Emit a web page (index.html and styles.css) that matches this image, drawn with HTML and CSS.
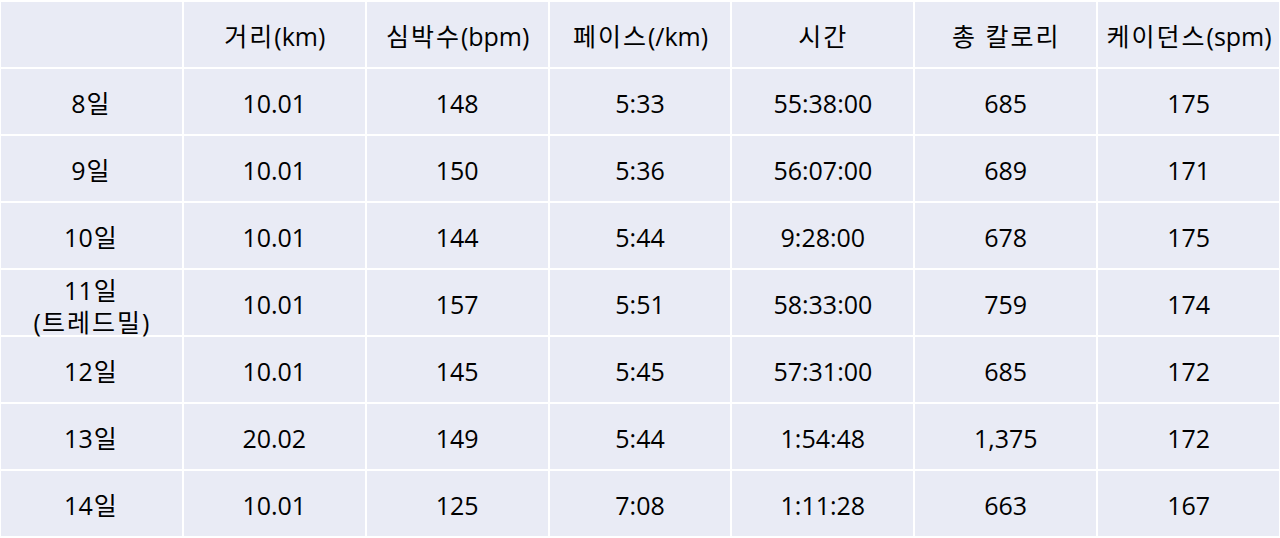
FILE: index.html
```html
<!DOCTYPE html>
<html lang="ko">
<head>
<meta charset="utf-8">
<link rel="stylesheet" href="styles.css">
</head>
<body>
<div class="table">
  <div class="cell"></div>
  <div class="cell"><span class="ko">거리</span>(km)</div>
  <div class="cell"><span class="ko">심박수</span>(bpm)</div>
  <div class="cell"><span class="ko">페이스</span>(/km)</div>
  <div class="cell"><span class="ko">시간</span></div>
  <div class="cell"><span class="ko">총 칼로리</span></div>
  <div class="cell"><span class="ko">케이던스</span>(spm)</div>

  <div class="cell">8<span class="ko">일</span></div>
  <div class="cell">10.01</div>
  <div class="cell">148</div>
  <div class="cell">5:33</div>
  <div class="cell">55:38:00</div>
  <div class="cell">685</div>
  <div class="cell">175</div>

  <div class="cell">9<span class="ko">일</span></div>
  <div class="cell">10.01</div>
  <div class="cell">150</div>
  <div class="cell">5:36</div>
  <div class="cell">56:07:00</div>
  <div class="cell">689</div>
  <div class="cell">171</div>

  <div class="cell">10<span class="ko">일</span></div>
  <div class="cell">10.01</div>
  <div class="cell">144</div>
  <div class="cell">5:44</div>
  <div class="cell">9:28:00</div>
  <div class="cell">678</div>
  <div class="cell">175</div>

  <div class="cell two">11<span class="ko">일</span><br>(<span class="ko">트레드밀</span>)</div>
  <div class="cell">10.01</div>
  <div class="cell">157</div>
  <div class="cell">5:51</div>
  <div class="cell">58:33:00</div>
  <div class="cell">759</div>
  <div class="cell">174</div>

  <div class="cell">12<span class="ko">일</span></div>
  <div class="cell">10.01</div>
  <div class="cell">145</div>
  <div class="cell">5:45</div>
  <div class="cell">57:31:00</div>
  <div class="cell">685</div>
  <div class="cell">172</div>

  <div class="cell">13<span class="ko">일</span></div>
  <div class="cell">20.02</div>
  <div class="cell">149</div>
  <div class="cell">5:44</div>
  <div class="cell">1:54:48</div>
  <div class="cell">1,375</div>
  <div class="cell">172</div>

  <div class="cell">14<span class="ko">일</span></div>
  <div class="cell">10.01</div>
  <div class="cell">125</div>
  <div class="cell">7:08</div>
  <div class="cell">1:11:28</div>
  <div class="cell">663</div>
  <div class="cell">167</div>
</div>
</body>
</html>
```
FILE: styles.css
```css
html, body {
  margin: 0;
  padding: 0;
  background: #ffffff;
}
body {
  width: 1280px;
  height: 538px;
  overflow: hidden;
  font-family: "Open Sans", "Noto Sans CJK KR", sans-serif;
  color: #000000;
}
.table {
  display: grid;
  grid-template-columns: repeat(7, 1fr);
  grid-auto-rows: 65px;
  gap: 2px;
  padding: 2px 1px 0 1px;
  background: #ffffff;
}
.cell {
  background: #e9ebf5;
  display: flex;
  align-items: center;
  justify-content: center;
  text-align: center;
  font-size: 25px;
  line-height: 1.2;
  padding-top: 3px;
}
.two {
  display: block;
  padding-top: 4px;
  line-height: 1.28;
}
.ko {
  letter-spacing: 2px;
  padding-left: 1px;
}
```
